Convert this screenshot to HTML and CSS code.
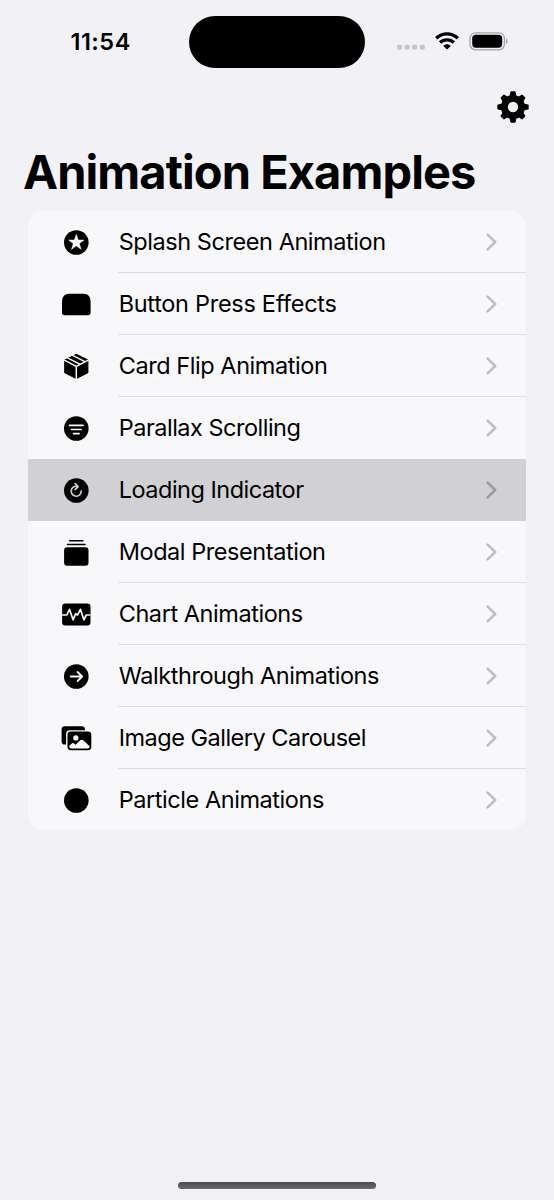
FILE: index.html
```html
<!DOCTYPE html>
<html lang="en">
<head>
<meta charset="utf-8">
<title>Animation Examples</title>
<link rel="stylesheet" href="styles.css">
</head>
<body>
<header class="status">
  <div class="time">11:54</div>
  <div class="island"></div>
  <div class="signals">
    <svg class="dots" width="28" height="6" viewBox="0 0 28 6"><rect x="0" y=".7" width="5" height="5" rx="1.6"/><rect x="7.6" y=".7" width="5" height="5" rx="1.6"/><rect x="15.2" y=".7" width="5" height="5" rx="1.6"/><rect x="22.8" y=".7" width="5" height="5" rx="1.6"/></svg>
    <svg class="wifi" width="24" height="18" viewBox="0 0 24 18"><g fill="none" stroke="#000" stroke-width="3.3"><path d="M1.2 6.2C7.2.4 16.8.4 22.8 6.2"/><path d="M5.1 10.5C9 6.9 15 6.9 18.9 10.5"/></g><path d="M12 17.6 8.2 13.9C10.4 11.8 13.6 11.8 15.8 13.9Z"/></svg>
    <svg class="battery" width="40" height="20" viewBox="0 0 40 20"><rect x="1" y=".8" width="34.4" height="17" rx="5.5" fill="none" stroke="#a4a3a8" stroke-width="1.3"/><rect x="3.2" y="2.8" width="30" height="13" rx="3.7"/><path d="M36.9 6.8C39.2 7.5 39.2 11.3 36.9 12Z" fill="#a4a3a8"/></svg>
  </div>
</header>
<nav class="toolbar">
  <svg width="34" height="34" viewBox="-17 -17 34 34">
    <circle r="8.6" fill="none" stroke="#000" stroke-width="6.8"/>
    <g stroke="#000" stroke-width="1.8" stroke-linejoin="round">
      <path d="M-2.6-10.5-1.7-14.8H1.7L2.6-10.5Z"/><path transform="rotate(45)" d="M-2.6-10.5-1.7-14.5H1.7L2.6-10.5Z"/><path transform="rotate(90)" d="M-2.6-10.5-1.7-14.8H1.7L2.6-10.5Z"/><path transform="rotate(135)" d="M-2.6-10.5-1.7-14.5H1.7L2.6-10.5Z"/><path transform="rotate(180)" d="M-2.6-10.5-1.7-14.8H1.7L2.6-10.5Z"/><path transform="rotate(225)" d="M-2.6-10.5-1.7-14.5H1.7L2.6-10.5Z"/><path transform="rotate(270)" d="M-2.6-10.5-1.7-14.8H1.7L2.6-10.5Z"/><path transform="rotate(315)" d="M-2.6-10.5-1.7-14.5H1.7L2.6-10.5Z"/>
    </g>
  </svg>
</nav>
<h1 class="title">Animation Examples</h1>
<main class="list">
  <div class="row"><svg class="icon" viewBox="-16.3 -16.5 32 32"><circle r="12.3"/><path fill="#f8f8fb" stroke="#f8f8fb" stroke-width=".6" stroke-linejoin="round" d="M0-8 1.9-2.4 7.6-2.4 3 1.1 4.7 6.7 0 3.3-4.7 6.7-3 1.1-7.6-2.4-1.9-2.4Z"/></svg><span class="label">Splash Screen Animation</span><svg class="chevron" viewBox="0 0 14 20"><path d="M2.6 2.6 10.2 10 2.6 17.4"/></svg></div>
  <div class="row"><svg class="icon" viewBox="-16.3 -16.5 32 32"><path d="M-14.3-2C-14.3-8-12-10.8-7-10.8H7C12-10.8 14.3-8 14.3-2V8Q14.3 10.8 11.5 10.8H-11.5Q-14.3 10.8-14.3 8Z"/></svg><span class="label loose">Button Press Effects</span><svg class="chevron" viewBox="0 0 14 20"><path d="M2.6 2.6 10.2 10 2.6 17.4"/></svg></div>
  <div class="row"><svg class="icon" viewBox="-16.3 -16.5 32 32"><path stroke="#000" stroke-linejoin="round" d="M0-12.2 11.6-6.6V6.2L0 12.2-11.6 6.2V-6.6Z"/><path fill="none" stroke="#f8f8fb" stroke-width="1.5" d="M-12.5-6.6 0-.2 12.5-6.6M0-.2V13.5M-9.4-8.9 4-2.1M-4.2-11.4 9-4.7"/></svg><span class="label">Card Flip Animation</span><svg class="chevron" viewBox="0 0 14 20"><path d="M2.6 2.6 10.2 10 2.6 17.4"/></svg></div>
  <div class="row"><svg class="icon" viewBox="-16.3 -16.5 32 32"><circle r="12.3"/><path fill="none" stroke="#f8f8fb" stroke-width="1.7" stroke-linecap="round" d="M-6.8-3.2H6.8M-4.8 1H4.8M-2.8 5.1H2.8"/></svg><span class="label tight">Parallax Scrolling</span><svg class="chevron" viewBox="0 0 14 20"><path d="M2.6 2.6 10.2 10 2.6 17.4"/></svg></div>
  <div class="row pressed"><svg class="icon" viewBox="-16.3 -16.5 32 32"><circle r="12.3"/><g fill="none" stroke="#d1d0d5" stroke-width="1.7" stroke-linecap="round" stroke-linejoin="round"><path d="M4.9.6A5 5 0 1 1 .4-4.2M-1.2-6.8 1.9-3.9-1.2-.9"/></g></svg><span class="label tight">Loading Indicator</span><svg class="chevron" viewBox="0 0 14 20"><path d="M2.6 2.6 10.2 10 2.6 17.4"/></svg></div>
  <div class="row"><svg class="icon" viewBox="-16.3 -16.5 32 32"><rect x="-12.2" y="-5.3" width="24.4" height="18.6" rx="3"/><path fill="none" stroke="#000" stroke-width="1.4" stroke-linecap="round" d="M-8.8-8H8.8M-6.7-11.7H6.7"/></svg><span class="label">Modal Presentation</span><svg class="chevron" viewBox="0 0 14 20"><path d="M2.6 2.6 10.2 10 2.6 17.4"/></svg></div>
  <div class="row"><svg class="icon" viewBox="-16.3 -16.5 32 32"><rect x="-14.2" y="-11" width="28.4" height="22" rx="3.3"/><path fill="none" stroke="#f8f8fb" stroke-width="1.7" stroke-linejoin="round" d="M-14.2.5H-9.5L-6.8-5.2-3.2 5.3-.6-.8 1.2.5 4.1-5.2 7.6 5.3 10 .5H14.2"/></svg><span class="label">Chart Animations</span><svg class="chevron" viewBox="0 0 14 20"><path d="M2.6 2.6 10.2 10 2.6 17.4"/></svg></div>
  <div class="row"><svg class="icon" viewBox="-16.3 -16.5 32 32"><circle r="12.3"/><path fill="none" stroke="#f8f8fb" stroke-width="1.8" stroke-linecap="round" stroke-linejoin="round" d="M-5.6 0H5.6M1.3-4.5 5.9 0 1.3 4.5"/></svg><span class="label">Walkthrough Animations</span><svg class="chevron" viewBox="0 0 14 20"><path d="M2.6 2.6 10.2 10 2.6 17.4"/></svg></div>
  <div class="row"><svg class="icon" viewBox="-16.3 -16.5 32 32"><rect x="-14.7" y="-12.3" width="23.4" height="18.4" rx="3.4"/><rect x="-10.2" y="-8.3" width="27" height="22" rx="4" fill="#f8f8fb"/><rect x="-8.8" y="-6.9" width="23.8" height="18.6" rx="3.4"/><circle cx="-.5" cy="-.6" r="2.6" fill="#f8f8fb"/><path fill="#f8f8fb" d="M-7 7.3-4.2 4.8Q-3.4 4.1-2.6 4.8L-.8 6.3 4.2 1.6Q5.4.7 6.6 1.6L13.3 7.8V8.3Q13.2 9.9 11.5 9.9H-5.3Q-7 9.9-7 8.3Z"/></svg><span class="label tight">Image Gallery Carousel</span><svg class="chevron" viewBox="0 0 14 20"><path d="M2.6 2.6 10.2 10 2.6 17.4"/></svg></div>
  <div class="row"><svg class="icon" viewBox="-16.3 -16.5 32 32"><circle r="12.3"/></svg><span class="label">Particle Animations</span><svg class="chevron" viewBox="0 0 14 20"><path d="M2.6 2.6 10.2 10 2.6 17.4"/></svg></div>
</main>
<footer class="home"><div class="home-bar"></div></footer>
</body>
</html>
```
FILE: styles.css
```css
* { box-sizing: border-box; }
body {
  margin: 0;
  height: 1200px;
  display: flex;
  flex-direction: column;
  background: #f2f1f6;
  color: #000;
  font-family: Inter, "Liberation Sans", sans-serif;
  overflow: hidden;
}
svg { display: block; flex: none; }
.status {
  height: 84px;
  padding-top: 15.5px;
  display: grid;
  grid-template-columns: 189px 176px 1fr;
}
.time {
  padding: 11.5px 0 0 70.5px;
  font-size: 23.5px;
  line-height: 30px;
  font-weight: 600;
  letter-spacing: 0.5px;
}
.island { height: 52.5px; border-radius: 26.25px; background: #000; }
.signals { display: flex; align-items: flex-start; padding-left: 32.3px; }
.dots { margin-top: 28.5px; fill: #c6c5ca; }
.wifi { margin: 16.5px 0 0 9.5px; }
.battery { margin: 16.5px 0 0 10.2px; }
.toolbar { height: 60px; display: flex; justify-content: flex-end; padding: 6px 24px 0 0; }
.title {
  margin: 0;
  height: 66.6px;
  padding-left: 23px;
  font-size: 47px;
  line-height: 56px;
  font-weight: 700;
  letter-spacing: -0.92px;
  white-space: nowrap;
}
.list {
  margin: 0 28px;
  height: 619.5px;
  flex: none;
  border-radius: 15px;
  background: #f8f8fb;
  overflow: hidden;
}
.row { height: 62px; display: flex; align-items: center; padding-left: 32px; }
.icon { width: 32px; height: 32px; }
.label {
  flex: 1;
  height: 100%;
  margin-left: 26px;
  padding-left: 0.7px;
  font-size: 23.5px;
  line-height: 62px;
  letter-spacing: -0.44px;
  border-bottom: 1px solid #dedee1;
  white-space: nowrap;
}
.loose { letter-spacing: -0.3px; }
.tight { letter-spacing: -0.5px; }
.chevron {
  width: 42px;
  height: 100%;
  padding: 1px 27px 0 1px;
  border-bottom: 1px solid #dedee1;
  fill: none;
  stroke: #bfbfc2;
  stroke-width: 2.7;
  stroke-linecap: round;
  stroke-linejoin: round;
}
.row:last-child > *, .row.pressed > *, .row:nth-child(4) > * { border-color: transparent; }
.pressed { background: #d1d0d5; }
.pressed .chevron { stroke: #9d9ca1; }
.home { margin-top: auto; height: 19px; display: flex; justify-content: center; }
.home-bar { width: 198px; height: 7px; margin-top: 0.5px; border-radius: 4px; background: linear-gradient(#4c4c4d, #6c6c6e); }
```
